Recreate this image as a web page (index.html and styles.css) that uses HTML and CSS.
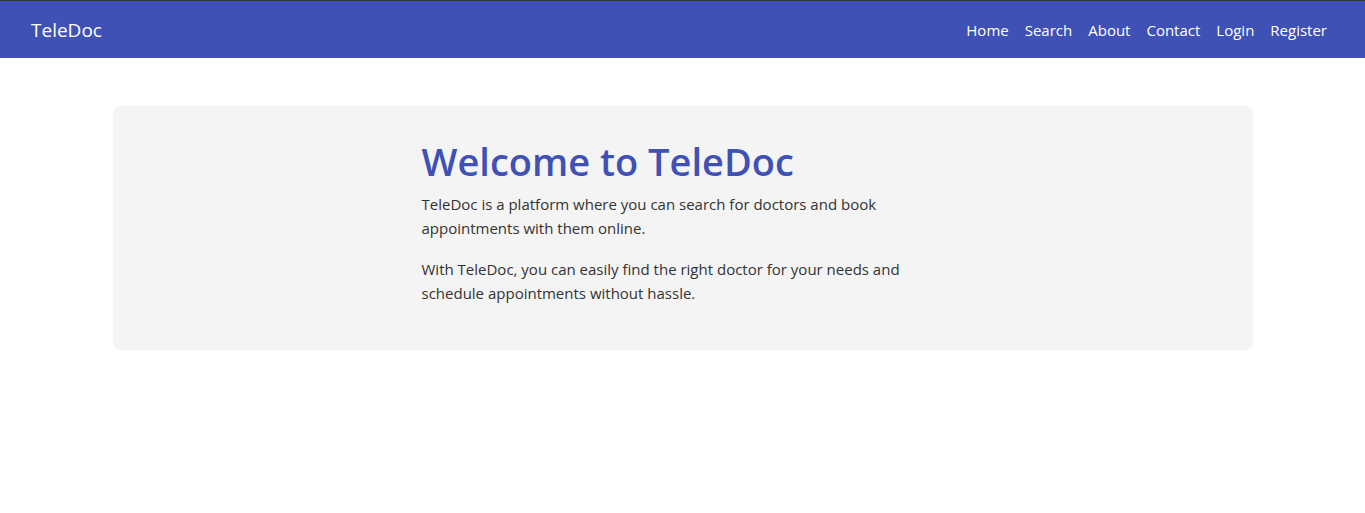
FILE: index.html
```html
<!DOCTYPE html>
<html lang="en">
<head>
    <meta charset="UTF-8">
    <meta name="viewport" content="width=device-width, initial-scale=1.0">
    <title>TeleDoc</title>
    <link rel="stylesheet" href="styles.css">
</head>
<body>
    <header class="navbar">
        <a href="#" class="brand">TeleDoc</a>
        <nav class="nav-links">
            <a href="#">Home</a>
            <a href="#">Search</a>
            <a href="#">About</a>
            <a href="#">Contact</a>
            <a href="#">Login</a>
            <a href="#">Register</a>
        </nav>
    </header>
    <main class="container">
        <section class="hero">
            <div class="hero-text">
                <h1>Welcome to TeleDoc</h1>
                <p>TeleDoc is a platform where you can search for doctors and book appointments with them online.</p>
                <p>With TeleDoc, you can easily find the right doctor for your needs and schedule appointments without hassle.</p>
            </div>
        </section>
    </main>
</body>
</html>
```
FILE: styles.css
```css
body {
    margin: 0;
    font-family: "Open Sans", "Noto Sans", sans-serif;
    background: #fff;
    color: #333;
    border-top: 1px solid #333;
}
a {
    text-decoration: none;
}
.navbar {
    display: flex;
    align-items: center;
    justify-content: space-between;
    box-sizing: border-box;
    height: 57px;
    padding: 1px 38px 0 31px;
    background: #3f51b5;
}
.brand {
    color: #fff;
    font-size: 19px;
}
.nav-links {
    display: flex;
    gap: 16px;
}
.nav-links a {
    color: #fff;
    font-size: 15px;
}
.container {
    max-width: 1140px;
    margin: 48px auto;
}
.hero {
    background: #f4f4f4;
    border-radius: 8px;
    padding: 33px 0 45px;
}
.hero-text {
    max-width: 520px;
    margin: 0 auto;
    padding-right: 2px;
}
.hero h1 {
    margin: 0 0 7px;
    font-size: 38px;
    font-weight: 600;
    line-height: 1.2;
    color: #3f51b5;
}
.hero p {
    margin: 0 0 17px;
    font-size: 15px;
    line-height: 24px;
}
.hero p:last-child {
    margin-bottom: 0;
}
```
